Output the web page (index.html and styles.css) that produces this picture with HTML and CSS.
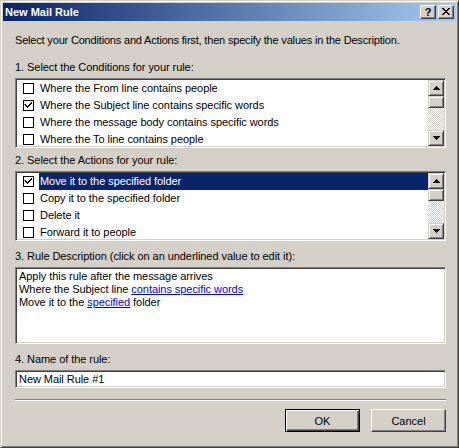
FILE: index.html
```html
<!DOCTYPE html>
<html lang="en">
<head>
    <meta charset="UTF-8">
    <title>New Mail Rule</title>
    <link rel="stylesheet" href="styles.css">
</head>
<body>
    <div class="window">
        <div class="titlebar">
            <span class="title">New Mail Rule</span>
            <div class="caption-buttons">
                <button class="caption-btn help">?</button>
                <button class="caption-btn">
                    <svg width="8" height="7" viewBox="0 0 8 7"><path d="M0 0h2v1h1v1h2v-1h1v-1h2v1h-1v1h-1v1h-1v1h1v1h1v1h1v1h-2v-1h-1v-1h-2v1h-1v1h-2v-1h1v-1h1v-1h1v-1h-1v-1h-1v-1h-1z" fill="#000"/></svg>
                </button>
            </div>
        </div>

        <div class="content">
            <p class="intro">Select your Conditions and Actions first, then specify the values in the Description.</p>

            <div class="label">1. Select the Conditions for your rule:</div>
            <div class="listbox">
                <ul class="items">
                    <li class="item"><span class="check"></span><span class="text">Where the From line contains people</span></li>
                    <li class="item"><span class="check checked"></span><span class="text">Where the Subject line contains specific words</span></li>
                    <li class="item"><span class="check"></span><span class="text">Where the message body contains specific words</span></li>
                    <li class="item"><span class="check"></span><span class="text">Where the To line contains people</span></li>
                </ul>
                <div class="scrollbar">
                    <div class="sb-btn"><svg width="7" height="4" viewBox="0 0 7 4"><path d="M3 0h1v1h1v1h1v1h1v1h-7v-1h1v-1h1v-1h1z" fill="#000"/></svg></div>
                    <div class="sb-thumb"></div>
                    <div class="sb-track"></div>
                    <div class="sb-btn"><svg width="7" height="4" viewBox="0 0 7 4"><path d="M0 0h7v1h-1v1h-1v1h-1v1h-1v-1h-1v-1h-1v-1h-1z" fill="#000"/></svg></div>
                </div>
            </div>

            <div class="label label-2">2. Select the Actions for your rule:</div>
            <div class="listbox">
                <ul class="items">
                    <li class="item selected"><span class="check checked"></span><span class="text">Move it to the specified folder</span></li>
                    <li class="item"><span class="check"></span><span class="text">Copy it to the specified folder</span></li>
                    <li class="item"><span class="check"></span><span class="text">Delete it</span></li>
                    <li class="item"><span class="check"></span><span class="text">Forward it to people</span></li>
                </ul>
                <div class="scrollbar">
                    <div class="sb-btn"><svg width="7" height="4" viewBox="0 0 7 4"><path d="M3 0h1v1h1v1h1v1h1v1h-7v-1h1v-1h1v-1h1z" fill="#000"/></svg></div>
                    <div class="sb-thumb"></div>
                    <div class="sb-track"></div>
                    <div class="sb-btn"><svg width="7" height="4" viewBox="0 0 7 4"><path d="M0 0h7v1h-1v1h-1v1h-1v1h-1v-1h-1v-1h-1v-1h-1z" fill="#000"/></svg></div>
                </div>
            </div>

            <div class="label label-3">3. Rule Description (click on an underlined value to edit it):</div>
            <div class="description">
                <div>Apply this rule after the message arrives</div>
                <div>Where the Subject line <a href="#" class="value">contains specific words</a></div>
                <div>Move it to the <a href="#" class="value">specified</a> folder</div>
            </div>

            <div class="label label-4">4. Name of the rule:</div>
            <input class="name-input" type="text" value="New Mail Rule #1">

            <div class="separator"></div>

            <div class="actions">
                <button class="btn default">OK</button>
                <button class="btn">Cancel</button>
            </div>
        </div>
    </div>
</body>
</html>
```

FILE: styles.css
```css
body {
    margin: 0;
    font-family: "Liberation Sans", Arial, sans-serif;
    font-size: 11px;
    letter-spacing: -0.06px;
    background-color: #d4d0c8;
}
.window {
    box-sizing: border-box;
    width: 459px;
    height: 448px;
    padding: 2px;
    background-color: #d4d0c8;
    border: 1px solid;
    border-color: #d4d0c8 #404040 #404040 #d4d0c8;
    box-shadow: inset 1px 1px #ffffff, inset -1px -1px #808080;
    display: flex;
    flex-direction: column;
}
.titlebar {
    height: 18px;
    display: flex;
    align-items: center;
    justify-content: space-between;
    padding: 0 2px 0 2px;
    background: linear-gradient(to right, #0a246a, #a6caf0);
}
.title {
    color: #ffffff;
    font-weight: bold;
    font-size: 11px;
    line-height: 13px;
    letter-spacing: 0;
}
.caption-buttons {
    display: flex;
    gap: 2px;
}
.caption-btn {
    box-sizing: border-box;
    width: 16px;
    height: 14px;
    padding: 0;
    margin: 0;
    display: flex;
    align-items: center;
    justify-content: center;
    background-color: #d4d0c8;
    border: 1px solid;
    border-color: #ffffff #404040 #404040 #ffffff;
    box-shadow: inset -1px -1px #808080;
    font-family: "Liberation Sans", Arial, sans-serif;
    font-weight: bold;
    font-size: 11px;
    line-height: 10px;
    color: #000000;
}
.caption-btn svg {
    display: block;
    margin-top: -1px;
}
.content {
    flex: 1;
    display: flex;
    flex-direction: column;
    padding: 13px 10px 0 12px;
}
.intro {
    margin: 0;
    line-height: 13px;
    letter-spacing: -0.18px;
}
.label {
    line-height: 13px;
    margin-top: 14px;
}
.label-2 {
    margin-top: 6px;
}
.label-3 {
    margin-top: 9px;
}
.label-4 {
    margin-top: 9px;
}
.listbox {
    box-sizing: border-box;
    height: 70px;
    margin-top: 4px;
    display: flex;
    background-color: #ffffff;
    border: 1px solid;
    border-color: #808080 #ffffff #ffffff #808080;
    box-shadow: inset 1px 1px #404040, inset -1px -1px #d4d0c8;
    padding: 1px;
}
.items {
    flex: 1;
    list-style: none;
    margin: 0;
    padding: 0;
    overflow: hidden;
}
.item {
    height: 17px;
    display: flex;
    align-items: center;
}
.check {
    box-sizing: border-box;
    width: 11px;
    height: 11px;
    margin-left: 6px;
    margin-right: 5px;
    border: 1px solid #000000;
    background-color: #ffffff;
    flex: none;
}
.check.checked {
    background: #ffffff url("data:image/svg+xml,%3Csvg xmlns='http://www.w3.org/2000/svg' width='9' height='9' viewBox='0 0 9 9'%3E%3Cpath d='M1 3h1v1h1v1h1v-1h1v-1h1v-1h1v-1h1v2h-1v1h-1v1h-1v1h-1v1h-1v-1h-1v-1h-1v-1h-1z' fill='%23000'/%3E%3C/svg%3E") no-repeat 0 0;
}
.text {
    flex: 1;
    height: 17px;
    line-height: 17px;
    padding-left: 1px;
    white-space: nowrap;
}
.selected .text {
    background-color: #0a246a;
    color: #ffffff;
}
.scrollbar {
    width: 16px;
    display: flex;
    flex-direction: column;
    flex: none;
}
.sb-btn, .sb-thumb {
    box-sizing: border-box;
    background-color: #d4d0c8;
    border: 1px solid;
    border-color: #d4d0c8 #404040 #404040 #d4d0c8;
    box-shadow: inset 1px 1px #ffffff, inset -1px -1px #808080;
}
.sb-btn {
    height: 16px;
    display: flex;
    align-items: center;
    justify-content: center;
}
.sb-thumb {
    height: 12px;
}
.sb-track {
    flex: 1;
    background: repeating-conic-gradient(#ffffff 0 25%, #d4d0c8 0 50%) 0 0 / 2px 2px;
}
.description {
    box-sizing: border-box;
    height: 77px;
    margin-top: 4px;
    padding: 2px 3px;
    line-height: 13px;
    background-color: #ffffff;
    border: 1px solid;
    border-color: #808080 #ffffff #ffffff #808080;
    box-shadow: inset 1px 1px #404040, inset -1px -1px #d4d0c8;
}
.value {
    color: #0000ff;
    text-decoration: underline;
}
.name-input {
    box-sizing: border-box;
    height: 18px;
    margin: 4px 0 0 0;
    padding: 0 3px;
    width: 100%;
    font-family: "Liberation Sans", Arial, sans-serif;
    font-size: 11px;
    letter-spacing: -0.06px;
    background-color: #ffffff;
    border: 1px solid;
    border-color: #808080 #ffffff #ffffff #808080;
    box-shadow: inset 1px 1px #404040, inset -1px -1px #d4d0c8;
    outline: none;
}
.separator {
    margin-top: 11px;
    border-top: 1px solid #808080;
    border-bottom: 1px solid #ffffff;
    height: 0;
}
.actions {
    display: flex;
    justify-content: flex-end;
    gap: 11px;
    margin-top: 8px;
}
.btn {
    box-sizing: border-box;
    width: 75px;
    height: 23px;
    padding: 0;
    font-family: "Liberation Sans", Arial, sans-serif;
    font-size: 11px;
    color: #000000;
    background-color: #d4d0c8;
    border: 1px solid;
    border-color: #ffffff #404040 #404040 #ffffff;
    box-shadow: inset -1px -1px #808080, inset 1px 1px #d4d0c8;
}
.btn.default {
    border: 1px solid #000000;
    box-shadow: inset 1px 1px #ffffff, inset -1px -1px #404040, inset -2px -2px #808080;
}
```
